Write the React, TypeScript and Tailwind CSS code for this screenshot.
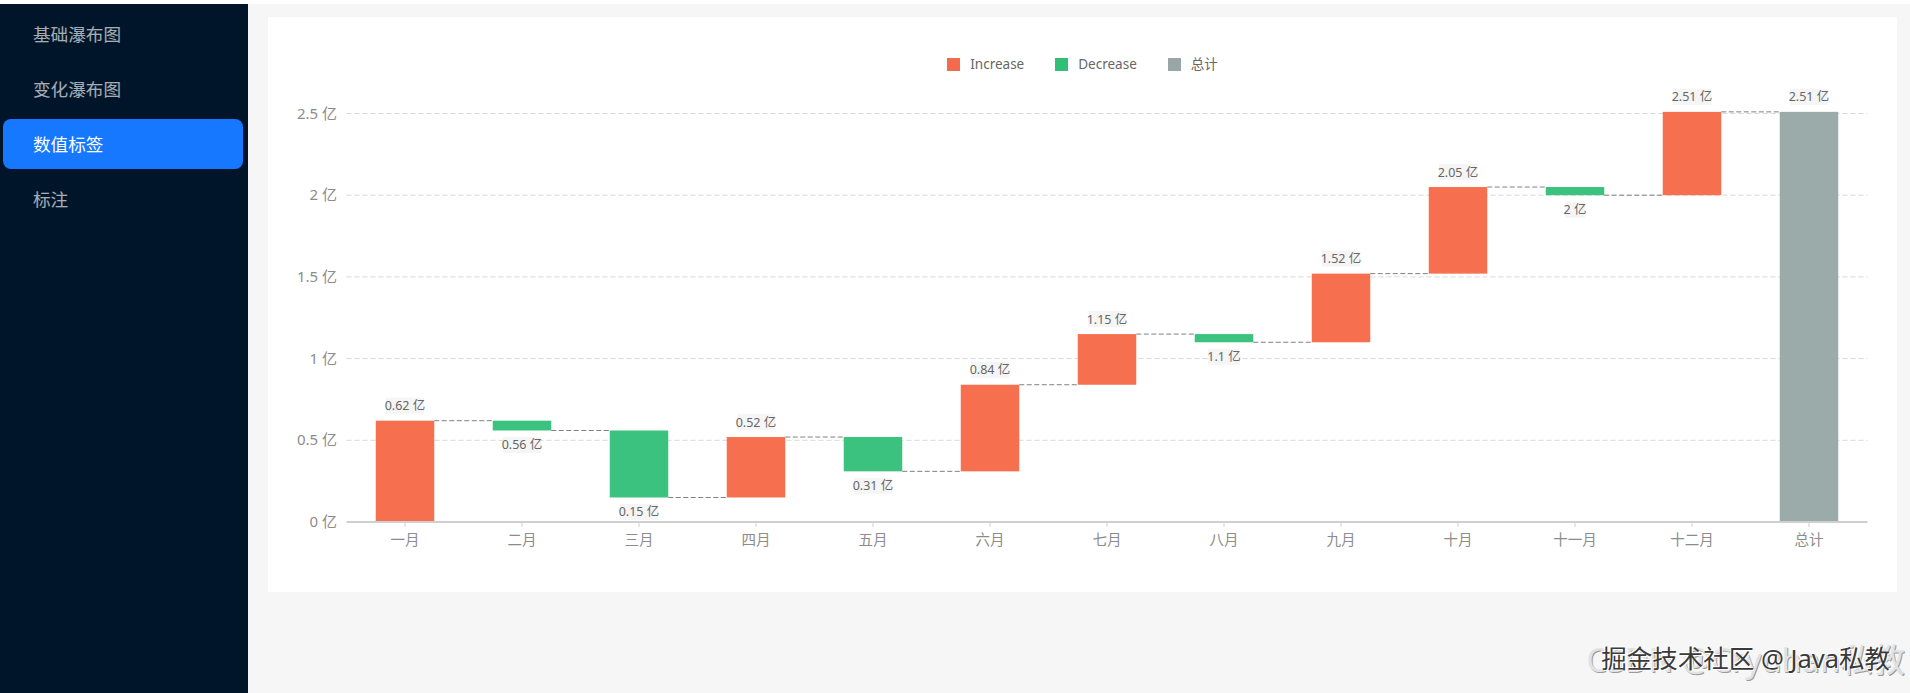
const FONT = '"Noto Sans", "Noto Sans CJK SC", sans-serif';

const menu = ["基础瀑布图", "变化瀑布图", "数值标签", "标注"];

const months = [
  { name: "一月", from: 0, to: 0.62, label: "0.62 亿" },
  { name: "二月", from: 0.62, to: 0.56, label: "0.56 亿" },
  { name: "三月", from: 0.56, to: 0.15, label: "0.15 亿" },
  { name: "四月", from: 0.15, to: 0.52, label: "0.52 亿" },
  { name: "五月", from: 0.52, to: 0.31, label: "0.31 亿" },
  { name: "六月", from: 0.31, to: 0.84, label: "0.84 亿" },
  { name: "七月", from: 0.84, to: 1.15, label: "1.15 亿" },
  { name: "八月", from: 1.15, to: 1.1, label: "1.1 亿" },
  { name: "九月", from: 1.1, to: 1.52, label: "1.52 亿" },
  { name: "十月", from: 1.52, to: 2.05, label: "2.05 亿" },
  { name: "十一月", from: 2.05, to: 2, label: "2 亿" },
  { name: "十二月", from: 2, to: 2.51, label: "2.51 亿" },
  { name: "总计", from: 0, to: 2.51, label: "2.51 亿", total: true },
];

const ticks = ["0 亿", "0.5 亿", "1 亿", "1.5 亿", "2 亿", "2.5 亿"];

const legend = [
  { label: "Increase", color: "bg-[#f5694e]" },
  { label: "Decrease", color: "bg-[#31bf78]" },
  { label: "总计", color: "bg-[#98a6a6]" },
];

const LEFT = 346.5;
const RIGHT = 1867.5;
const BASE = 522;
const STEP = (RIGHT - LEFT) / 13;
const BAR = 58.5;
const y = (v: number) => BASE - v * 163.4;

const Chart = () => {
  return (
    <svg viewBox="268 75 1629 517" className="block h-[517px] w-[1629px]">
      {/* grid */}
      {ticks.map((t, i) => (
        <g key={t}>
          {i > 0 && (
            <line x1={LEFT} x2={RIGHT} y1={y(i * 0.5)} y2={y(i * 0.5)} stroke="#d9d9d9" strokeWidth="1" strokeDasharray="5 3" />
          )}
          <text x={337} y={y(i * 0.5) + 5} textAnchor="end" fontSize="15" fill="#8c8c8c">
            {t}
          </text>
        </g>
      ))}

      {/* connectors */}
      {months.slice(0, -1).map((m, i) => (
        <line
          key={m.name}
          x1={LEFT + STEP * i + (STEP + BAR) / 2}
          x2={LEFT + STEP * (i + 1) + (STEP - BAR) / 2}
          y1={y(m.to)}
          y2={y(m.to)}
          stroke="#808080"
          strokeWidth="1"
          strokeDasharray="5 2.5"
        />
      ))}

      {/* bars */}
      {months.map((m, i) => {
        const cx = LEFT + STEP * i + STEP / 2;
        const top = y(Math.max(m.from, m.to));
        const bottom = y(Math.min(m.from, m.to));
        const down = m.to < m.from;
        const fill = m.total ? "#9aabaa" : down ? "#3bc27e" : "#f6704f";
        const labelY = down ? bottom + 14.5 : top - 15;
        const w = m.label.length * 6 + 2;
        return (
          <g key={m.name}>
            <rect x={cx - BAR / 2} y={top} width={BAR} height={bottom - top} fill={fill} />
            <rect x={cx - w / 2} y={labelY - 8} width={w} height={16} fill="#f5f5f5" />
            <text x={cx} y={labelY + 4.5} textAnchor="middle" fontSize="12.5" fill="#666666">
              {m.label}
            </text>
          </g>
        );
      })}

      {/* x axis */}
      <line x1={LEFT} x2={RIGHT} y1={BASE} y2={BASE} stroke="#cfcfcf" strokeWidth="2" />
      {months.map((m, i) => {
        const cx = LEFT + STEP * i + STEP / 2;
        return (
          <g key={m.name}>
            <line x1={cx} x2={cx} y1={BASE} y2={BASE + 5} stroke="#cfcfcf" strokeWidth="1" />
            <text x={cx} y={BASE + 22.5} textAnchor="middle" fontSize="14.5" fill="#8c8c8c">
              {m.name}
            </text>
          </g>
        );
      })}
    </svg>
  );
};

export default function App() {
  return (
    <div className="relative flex h-[693px] w-full overflow-hidden bg-white pt-1" style={{ fontFamily: FONT }}>
      {/* Sidebar */}
      <aside className="flex w-[248px] shrink-0 flex-col gap-[5px] bg-[#001529] px-[3px] pt-[5px]">
        {menu.map((item) => (
          <div
            key={item}
            className={
              item === "数值标签"
                ? "flex h-[50px] w-[240px] items-center rounded-lg bg-[#1677ff] pl-[30px] text-[17.6px] text-white"
                : "flex h-[50px] w-[240px] items-center rounded-lg pl-[30px] text-[17.6px] text-white/65"
            }
          >
            {item}
          </div>
        ))}
      </aside>

      {/* Content */}
      <main className="flex-1 bg-[#f6f6f6] pl-5 pr-[13px] pt-[13px]">
        <div className="h-[575px] w-[1629px] bg-white pt-[37px]">
          <div className="flex h-[21px] items-center justify-center gap-[31px] text-[13.5px] text-[#666666]">
            {legend.map((l) => (
              <div key={l.label} className="flex items-center gap-[10px]">
                <span className={`h-[13px] w-[13px] ${l.color}`} />
                <span>{l.label}</span>
              </div>
            ))}
          </div>
          <Chart />
        </div>
      </main>

      {/* Watermarks */}
      <div className="absolute right-[5px] top-[640px] whitespace-nowrap text-[32.5px] leading-[40px] text-[#e2e2e2] [text-shadow:1px_1px_0_#9a9a9a]">
        CSDN @Cryuhan私教
      </div>
      <div className="absolute right-[20px] top-[642px] whitespace-nowrap text-[25.5px] leading-[32px] text-[#3a3a3a] [text-shadow:1px_1px_0_#ffffff,-1px_-1px_0_#ffffff]">
        掘金技术社区 @ Java私教
      </div>
    </div>
  );
}
